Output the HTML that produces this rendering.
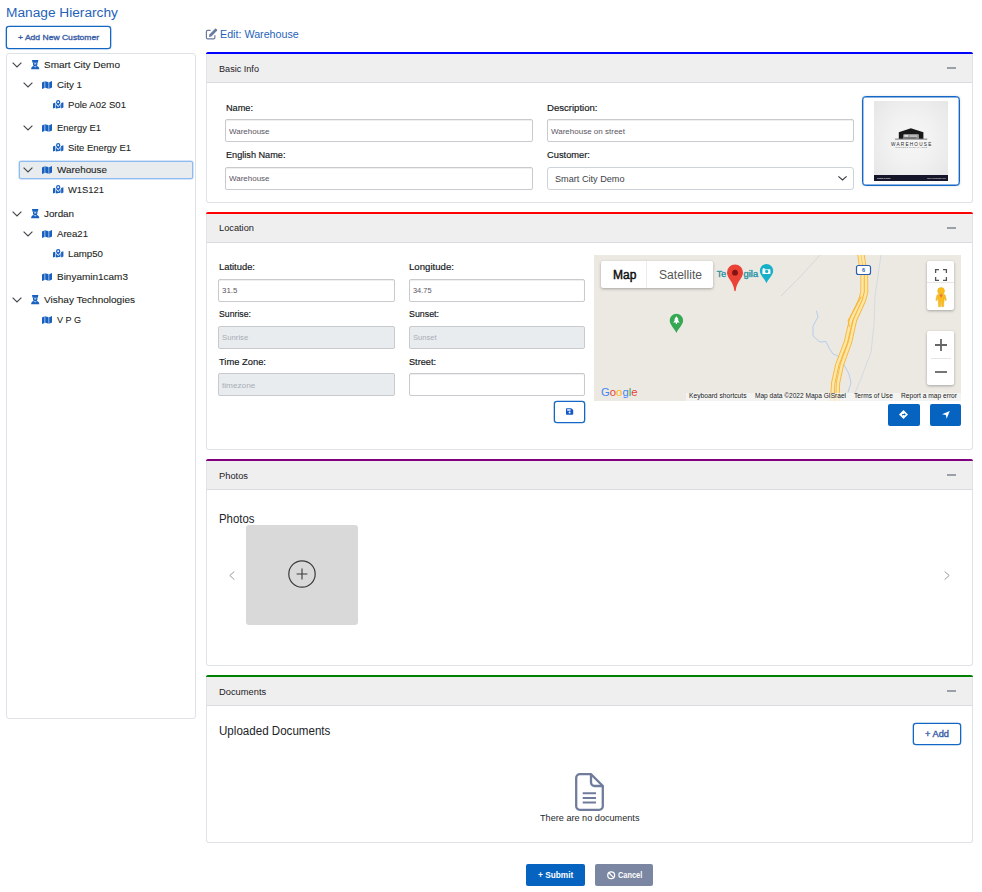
<!DOCTYPE html>
<html><head><meta charset="utf-8"><title>Manage Hierarchy</title>
<style>
*{box-sizing:border-box;margin:0;padding:0}
html,body{width:982px;height:892px;background:#fff;overflow:hidden}
body{font-family:"Liberation Sans",sans-serif;color:#212529;position:relative;font-size:10px}
.t{position:absolute;white-space:nowrap;transform-origin:0 0}
.a{position:absolute}
.btn-o{position:absolute;border:1px solid #1266c4;border-radius:3px;background:#fff;box-shadow:0 0 0 0.3px #1266c4}
.tree{position:absolute;left:6px;top:53px;width:190px;height:666px;border:1px solid #dee2e6;border-radius:3px;background:#fff}
.card{position:absolute;left:206px;width:767px;border:1px solid #dfe3e8;border-top:none;border-radius:3px;background:#fff}
.card .top{position:absolute;left:-1px;right:-1px;top:0;height:2px;border-radius:3px 3px 0 0}
.card .hd{position:absolute;left:0;right:0;top:2px;height:29px;background:#efefef;border-bottom:1px solid #d9dde2}
.card .minus{position:absolute;left:740px;top:15px;width:9px;height:2px;background:#9aa0a7}
.inp{position:absolute;height:23px;border:1px solid #c8cacd;border-radius:2px;background:#fff;box-shadow:inset 0 1px 1px rgba(0,0,0,.07)}
.inp.dis{background:#e9ecef;box-shadow:none}
svg{position:absolute;overflow:visible}
</style></head><body>
<div class="t" style="left:6.00px;top:-2px;font-size:13.7px;line-height:29px;transform:scaleX(1.0006);letter-spacing:0.000px;color:#1f63ba;">Manage Hierarchy</div>
<div class="btn-o" style="left:6px;top:26px;width:105px;height:23px"></div>
<div class="t" style="left:17.80px;top:29px;font-size:8px;line-height:17px;transform:scaleX(1.0684);letter-spacing:0.000px;color:#3a5ea8;-webkit-text-stroke:0.35px #3a5ea8;">+ Add New Customer</div>
<div class="tree"></div>
<div class="a" style="left:19px;top:161px;width:174px;height:18px;background:#e9ecef;border:1px solid #8fbcf0;border-radius:2px;box-shadow:0 0 0 0.5px #a9ccf5"></div>
<svg style="left:12px;top:62.0px" width="10" height="6" viewBox="0 0 10 6"><path d="M0.6 0.6 L5 5 L9.4 0.6" fill="none" stroke="#44484d" stroke-width="1.150"/></svg>
<svg style="left:31px;top:60.0px" width="8.400" height="9.200" viewBox="0 0 8.400 9.200" fill="#1760c0"><path d="M1 0.100h6.400L6.900 2.700H1.500z"/><path d="M2 2.700h4.400v1.500a2.200 2.200 0 0 1-4.400 0z"/><rect x="3.100" y="3.100" width="2.200" height="1.500" rx="0.500" fill="#a9c6ee"/><path d="M0.100 9.200c0-1.900 1.100-3 2.700-3.200L4.200 7.500 5.600 6c1.600.2 2.700 1.300 2.700 3.200z"/></svg>
<div class="t" style="left:44.30px;top:54px;font-size:9.8px;line-height:21px;transform:scaleX(1.0188);letter-spacing:0.000px;color:#1c1f23;-webkit-text-stroke:0.1px #1c1f23;">Smart City Demo</div>
<svg style="left:23px;top:82.0px" width="10" height="6" viewBox="0 0 10 6"><path d="M0.6 0.6 L5 5 L9.4 0.6" fill="none" stroke="#44484d" stroke-width="1.150"/></svg>
<svg style="left:42px;top:81.0px" width="10" height="8" viewBox="0 0 10 8" fill="#1760c0"><path d="M0 1.4L2.6 0.3v6.6L0 8z"/><path d="M3.2 0.2l3.4 1v6.6l-3.4-1z"/><path d="M7.2 1.2L10 0v6.6L7.2 7.8z"/></svg>
<div class="t" style="left:57.00px;top:74px;font-size:9.8px;line-height:21px;transform:scaleX(0.9980);letter-spacing:0.000px;color:#1c1f23;-webkit-text-stroke:0.1px #1c1f23;">City 1</div>
<svg style="left:52.5px;top:100.0px" width="10.400" height="8.700" viewBox="0 0 11 9" fill="#1760c0"><path d="M0 3.6L2.4 2.6v5.6L0 9z"/><path d="M3 4.2c.6 1.2 1.6 2.4 2.5 3 .9-.6 1.900-1.800 2.500-3V8.200L3 8.9z" /><path d="M8.600 3.200L11 2.300v5.600L8.600 8.900z"/><path d="M5.500 0a2.300 2.300 0 0 0-2.300 2.300c0 1.200 1.300 2.800 2.300 3.900 1-1.100 2.300-2.700 2.300-3.900A2.300 2.300 0 0 0 5.500 0zm0 3.300a1 1 0 1 1 0-2 1 1 0 0 1 0 2z"/></svg>
<div class="t" style="left:68.00px;top:94px;font-size:9.8px;line-height:21px;transform:scaleX(0.9765);letter-spacing:0.000px;color:#1c1f23;-webkit-text-stroke:0.1px #1c1f23;">Pole A02 S01</div>
<svg style="left:23px;top:125.0px" width="10" height="6" viewBox="0 0 10 6"><path d="M0.6 0.6 L5 5 L9.4 0.6" fill="none" stroke="#44484d" stroke-width="1.150"/></svg>
<svg style="left:42px;top:124.0px" width="10" height="8" viewBox="0 0 10 8" fill="#1760c0"><path d="M0 1.4L2.6 0.3v6.6L0 8z"/><path d="M3.2 0.2l3.4 1v6.6l-3.4-1z"/><path d="M7.2 1.2L10 0v6.6L7.2 7.8z"/></svg>
<div class="t" style="left:57.00px;top:117px;font-size:9.8px;line-height:21px;transform:scaleX(0.9615);letter-spacing:0.000px;color:#1c1f23;-webkit-text-stroke:0.1px #1c1f23;">Energy E1</div>
<svg style="left:52.5px;top:143.0px" width="10.400" height="8.700" viewBox="0 0 11 9" fill="#1760c0"><path d="M0 3.6L2.4 2.6v5.6L0 9z"/><path d="M3 4.2c.6 1.2 1.6 2.4 2.5 3 .9-.6 1.900-1.800 2.500-3V8.200L3 8.9z" /><path d="M8.600 3.200L11 2.300v5.600L8.600 8.900z"/><path d="M5.500 0a2.300 2.300 0 0 0-2.300 2.300c0 1.200 1.300 2.800 2.300 3.900 1-1.100 2.300-2.700 2.300-3.900A2.300 2.300 0 0 0 5.500 0zm0 3.300a1 1 0 1 1 0-2 1 1 0 0 1 0 2z"/></svg>
<div class="t" style="left:68.00px;top:137px;font-size:9.8px;line-height:21px;transform:scaleX(0.9637);letter-spacing:0.000px;color:#1c1f23;-webkit-text-stroke:0.1px #1c1f23;">Site Energy E1</div>
<svg style="left:23px;top:167.0px" width="10" height="6" viewBox="0 0 10 6"><path d="M0.6 0.6 L5 5 L9.4 0.6" fill="none" stroke="#44484d" stroke-width="1.150"/></svg>
<svg style="left:42px;top:166.0px" width="10" height="8" viewBox="0 0 10 8" fill="#1760c0"><path d="M0 1.4L2.6 0.3v6.6L0 8z"/><path d="M3.2 0.2l3.4 1v6.6l-3.4-1z"/><path d="M7.2 1.2L10 0v6.6L7.2 7.8z"/></svg>
<div class="t" style="left:57.00px;top:159px;font-size:9.8px;line-height:21px;transform:scaleX(1.0050);letter-spacing:0.000px;color:#1c1f23;-webkit-text-stroke:0.1px #1c1f23;">Warehouse</div>
<svg style="left:52.5px;top:185.0px" width="10.400" height="8.700" viewBox="0 0 11 9" fill="#1760c0"><path d="M0 3.6L2.4 2.6v5.6L0 9z"/><path d="M3 4.2c.6 1.2 1.6 2.4 2.5 3 .9-.6 1.900-1.800 2.500-3V8.200L3 8.9z" /><path d="M8.600 3.200L11 2.300v5.600L8.600 8.900z"/><path d="M5.500 0a2.300 2.300 0 0 0-2.300 2.300c0 1.200 1.300 2.800 2.300 3.900 1-1.100 2.300-2.700 2.300-3.900A2.300 2.300 0 0 0 5.500 0zm0 3.300a1 1 0 1 1 0-2 1 1 0 0 1 0 2z"/></svg>
<div class="t" style="left:68.00px;top:179px;font-size:9.8px;line-height:21px;transform:scaleX(0.9578);letter-spacing:0.000px;color:#1c1f23;-webkit-text-stroke:0.1px #1c1f23;">W1S121</div>
<svg style="left:12px;top:211.0px" width="10" height="6" viewBox="0 0 10 6"><path d="M0.6 0.6 L5 5 L9.4 0.6" fill="none" stroke="#44484d" stroke-width="1.150"/></svg>
<svg style="left:31px;top:209.0px" width="8.400" height="9.200" viewBox="0 0 8.400 9.200" fill="#1760c0"><path d="M1 0.100h6.400L6.900 2.700H1.500z"/><path d="M2 2.700h4.400v1.500a2.200 2.200 0 0 1-4.400 0z"/><rect x="3.100" y="3.100" width="2.200" height="1.500" rx="0.500" fill="#a9c6ee"/><path d="M0.100 9.200c0-1.900 1.100-3 2.700-3.200L4.200 7.500 5.600 6c1.600.2 2.700 1.300 2.700 3.200z"/></svg>
<div class="t" style="left:44.30px;top:203px;font-size:9.8px;line-height:21px;transform:scaleX(1.0012);letter-spacing:0.000px;color:#1c1f23;-webkit-text-stroke:0.1px #1c1f23;">Jordan</div>
<svg style="left:23px;top:231.0px" width="10" height="6" viewBox="0 0 10 6"><path d="M0.6 0.6 L5 5 L9.4 0.6" fill="none" stroke="#44484d" stroke-width="1.150"/></svg>
<svg style="left:42px;top:230.0px" width="10" height="8" viewBox="0 0 10 8" fill="#1760c0"><path d="M0 1.4L2.6 0.3v6.6L0 8z"/><path d="M3.2 0.2l3.4 1v6.6l-3.4-1z"/><path d="M7.2 1.2L10 0v6.6L7.2 7.8z"/></svg>
<div class="t" style="left:57.00px;top:223px;font-size:9.8px;line-height:21px;transform:scaleX(0.9810);letter-spacing:0.000px;color:#1c1f23;-webkit-text-stroke:0.1px #1c1f23;">Area21</div>
<svg style="left:52.5px;top:249.0px" width="10.400" height="8.700" viewBox="0 0 11 9" fill="#1760c0"><path d="M0 3.6L2.4 2.6v5.6L0 9z"/><path d="M3 4.2c.6 1.2 1.6 2.4 2.5 3 .9-.6 1.900-1.800 2.500-3V8.200L3 8.9z" /><path d="M8.600 3.200L11 2.300v5.600L8.600 8.900z"/><path d="M5.500 0a2.300 2.300 0 0 0-2.300 2.300c0 1.200 1.300 2.800 2.300 3.900 1-1.100 2.300-2.700 2.300-3.900A2.300 2.300 0 0 0 5.500 0zm0 3.300a1 1 0 1 1 0-2 1 1 0 0 1 0 2z"/></svg>
<div class="t" style="left:68.00px;top:243px;font-size:9.8px;line-height:21px;transform:scaleX(0.9883);letter-spacing:0.000px;color:#1c1f23;-webkit-text-stroke:0.1px #1c1f23;">Lamp50</div>
<svg style="left:42px;top:273.0px" width="10" height="8" viewBox="0 0 10 8" fill="#1760c0"><path d="M0 1.4L2.6 0.3v6.6L0 8z"/><path d="M3.2 0.2l3.4 1v6.6l-3.4-1z"/><path d="M7.2 1.2L10 0v6.6L7.2 7.8z"/></svg>
<div class="t" style="left:57.00px;top:266px;font-size:9.8px;line-height:21px;transform:scaleX(1.0184);letter-spacing:0.000px;color:#1c1f23;-webkit-text-stroke:0.1px #1c1f23;">Binyamin1cam3</div>
<svg style="left:12px;top:297.0px" width="10" height="6" viewBox="0 0 10 6"><path d="M0.6 0.6 L5 5 L9.4 0.6" fill="none" stroke="#44484d" stroke-width="1.150"/></svg>
<svg style="left:31px;top:295.0px" width="8.400" height="9.200" viewBox="0 0 8.400 9.200" fill="#1760c0"><path d="M1 0.100h6.400L6.900 2.700H1.500z"/><path d="M2 2.700h4.400v1.500a2.200 2.200 0 0 1-4.400 0z"/><rect x="3.100" y="3.100" width="2.200" height="1.500" rx="0.500" fill="#a9c6ee"/><path d="M0.100 9.200c0-1.900 1.100-3 2.700-3.200L4.200 7.500 5.600 6c1.600.2 2.700 1.300 2.700 3.200z"/></svg>
<div class="t" style="left:44.30px;top:289px;font-size:9.8px;line-height:21px;transform:scaleX(1.0226);letter-spacing:0.000px;color:#1c1f23;-webkit-text-stroke:0.1px #1c1f23;">Vishay Technologies</div>
<svg style="left:42px;top:316.0px" width="10" height="8" viewBox="0 0 10 8" fill="#1760c0"><path d="M0 1.4L2.6 0.3v6.6L0 8z"/><path d="M3.2 0.2l3.4 1v6.6l-3.4-1z"/><path d="M7.2 1.2L10 0v6.6L7.2 7.8z"/></svg>
<div class="t" style="left:57.00px;top:309px;font-size:9.8px;line-height:21px;transform:scaleX(0.9243);letter-spacing:0.000px;color:#1c1f23;-webkit-text-stroke:0.1px #1c1f23;">V P G</div>
<svg style="left:205px;top:28px" width="13" height="12" viewBox="205 28 13 12"><path d="M214.900 35.200V37.600a1.300 1.300 0 0 1-1.300 1.300H207.700a1.300 1.300 0 0 1-1.300-1.300V31.700a1.300 1.300 0 0 1 1.300-1.300H210.600" fill="none" stroke="#6a7a9d" stroke-width="1.200"/><path d="M208.900 37l0.500-2.400 5.600-5.900a.8.800 0 0 1 1.100 0l.9.900a.8.800 0 0 1 0 1.100l-5.700 5.800z" fill="#6a7a9d"/></svg>
<div class="t" style="left:220.20px;top:23px;font-size:10.5px;line-height:22px;transform:scaleX(1.0203);letter-spacing:0.000px;color:#1f63ba;">Edit: Warehouse</div>
<div class="card" style="top:52px;height:151px"><div class="top" style="background:#0000ff"></div><div class="hd"></div><div class="minus"></div></div>
<div class="t" style="left:218.60px;top:58px;font-size:9.7px;line-height:21px;transform:scaleX(0.9391);letter-spacing:0.000px;color:#1d2126;">Basic Info</div>
<div class="t" style="left:226.00px;top:97px;font-size:9.7px;line-height:21px;transform:scaleX(0.9451);letter-spacing:0.000px;color:#15181b;-webkit-text-stroke:0.17px #15181b;">Name:</div>
<div class="inp" style="left:225px;top:119px;width:308px;height:23px"></div>
<div class="t" style="left:229.00px;top:123px;font-size:8px;line-height:17px;transform:scaleX(0.9972);letter-spacing:0.000px;color:#5a5560;">Warehouse</div>
<div class="t" style="left:226.00px;top:144px;font-size:9.7px;line-height:21px;transform:scaleX(0.9433);letter-spacing:0.000px;color:#15181b;-webkit-text-stroke:0.17px #15181b;">English Name:</div>
<div class="inp" style="left:225px;top:167px;width:308px;height:23px"></div>
<div class="t" style="left:229.00px;top:170px;font-size:8px;line-height:17px;transform:scaleX(0.9972);letter-spacing:0.000px;color:#5a5560;">Warehouse</div>
<div class="t" style="left:547.00px;top:97px;font-size:9.7px;line-height:21px;transform:scaleX(0.9861);letter-spacing:0.000px;color:#15181b;-webkit-text-stroke:0.17px #15181b;">Description:</div>
<div class="inp" style="left:547px;top:119px;width:307px;height:23px"></div>
<div class="t" style="left:551.00px;top:123px;font-size:8px;line-height:17px;transform:scaleX(1.0005);letter-spacing:0.000px;color:#5a5560;">Warehouse on street</div>
<div class="t" style="left:547.00px;top:144px;font-size:9.7px;line-height:21px;transform:scaleX(0.9611);letter-spacing:0.000px;color:#15181b;-webkit-text-stroke:0.17px #15181b;">Customer:</div>
<div class="a" style="left:547px;top:167px;width:307px;height:23px;border:1px solid #cdd3da;border-radius:3px;background:#fff"></div>
<div class="t" style="left:555.00px;top:170px;font-size:9px;line-height:18px;transform:scaleX(1.0144);letter-spacing:0.000px;color:#3d4248;">Smart City Demo</div>
<svg style="left:838px;top:175.700px" width="9" height="5" viewBox="0 0 9 5"><path d="M0.400 0.400L4.500 4 8.600 0.400" fill="none" stroke="#343a40" stroke-width="1.100"/></svg>
<div class="a" style="left:862px;top:96px;width:98px;height:90px;border:1px solid #1668c7;border-radius:3.500px;background:#fff;box-shadow:0 0 3px rgba(0,0,0,.13), inset 0 0 0 0.400px #1668c7"></div>
<div class="a" style="left:874px;top:101px;width:74px;height:80px;background:radial-gradient(ellipse at 50% 48%,#f7f7f7 0%,#f1f1f1 45%,#e5e5e5 100%)"></div>
<div class="a" style="left:874px;top:175px;width:74px;height:6px;background:#15162a"></div>
<svg style="left:895px;top:127.500px" width="33" height="12" viewBox="895 127.500 33 12"><path d="M898.800 138.300V131.700L910.900 127.700 923.400 131.700V138.300H918.500V134H903.600V138.300z" fill="#191919"/><rect x="903.600" y="134" width="14.900" height="4.300" fill="#9a9a9a"/><rect x="904.400" y="134.600" width="3.800" height="1.600" fill="#e8e8e8"/><rect x="909.500" y="135" width="7.600" height="1.100" fill="#d4d4d4"/><rect x="904.400" y="137" width="12" height="0.800" fill="#555"/><path d="M895 138.600H927.300" stroke="#2a2a2a" stroke-width="0.600"/></svg>
<div class="t" style="left:891.00px;top:139px;font-size:4.7px;line-height:11px;transform:scaleX(1.0000);letter-spacing:1.220px;color:#2a2a2a;">WAREHOUSE</div>
<div class="t" style="left:895.50px;top:145px;font-size:1.7px;line-height:4px;transform:scaleX(1.0000);letter-spacing:0.534px;color:#555;">BUSINESS SLOGAN HERE</div>
<div class="t" style="left:876.50px;top:176px;font-size:1.9px;line-height:4px;transform:scaleX(0.7509);letter-spacing:0.000px;color:#e8e8e8;font-weight:700;">designed by freepik</div>
<div class="t" style="left:927.30px;top:176px;font-size:1.9px;line-height:4px;transform:scaleX(1.0003);letter-spacing:0.000px;color:#e8e8e8;">www.yourwebsite.com</div>
<div class="card" style="top:212px;height:238px"><div class="top" style="background:#ff0000"></div><div class="hd"></div><div class="minus"></div></div>
<div class="t" style="left:218.60px;top:217px;font-size:9.7px;line-height:21px;transform:scaleX(0.9544);letter-spacing:0.000px;color:#1d2126;">Location</div>
<div class="t" style="left:218.80px;top:256px;font-size:9.7px;line-height:21px;transform:scaleX(0.9674);letter-spacing:0.000px;color:#15181b;-webkit-text-stroke:0.17px #15181b;">Latitude:</div>
<div class="inp" style="left:218px;top:279px;width:177px;height:23px"></div>
<div class="t" style="left:222.00px;top:282px;font-size:8px;line-height:17px;transform:scaleX(0.9891);letter-spacing:0.000px;color:#5a5560;">31.5</div>
<div class="t" style="left:218.80px;top:303px;font-size:9.7px;line-height:21px;transform:scaleX(0.8993);letter-spacing:0.000px;color:#15181b;-webkit-text-stroke:0.17px #15181b;">Sunrise:</div>
<div class="inp dis" style="left:218px;top:326px;width:177px;height:23px"></div>
<div class="t" style="left:222.00px;top:329px;font-size:8px;line-height:17px;transform:scaleX(0.9696);letter-spacing:0.000px;color:#a7aeb6;">Sunrise</div>
<div class="t" style="left:218.80px;top:351px;font-size:9.7px;line-height:21px;transform:scaleX(0.9652);letter-spacing:0.000px;color:#15181b;-webkit-text-stroke:0.17px #15181b;">Time Zone:</div>
<div class="inp dis" style="left:218px;top:373px;width:177px;height:23px"></div>
<div class="t" style="left:222.00px;top:377px;font-size:8px;line-height:17px;transform:scaleX(1.0258);letter-spacing:0.000px;color:#a7aeb6;">timezone</div>
<div class="t" style="left:409.00px;top:256px;font-size:9.7px;line-height:21px;transform:scaleX(0.9932);letter-spacing:0.000px;color:#15181b;-webkit-text-stroke:0.17px #15181b;">Longitude:</div>
<div class="inp" style="left:409px;top:279px;width:176px;height:23px"></div>
<div class="t" style="left:413.00px;top:282px;font-size:8px;line-height:17px;transform:scaleX(0.9241);letter-spacing:0.000px;color:#5a5560;">34.75</div>
<div class="t" style="left:409.00px;top:303px;font-size:9.7px;line-height:21px;transform:scaleX(0.9120);letter-spacing:0.000px;color:#15181b;-webkit-text-stroke:0.17px #15181b;">Sunset:</div>
<div class="inp dis" style="left:409px;top:326px;width:176px;height:23px"></div>
<div class="t" style="left:413.00px;top:329px;font-size:8px;line-height:17px;transform:scaleX(0.9435);letter-spacing:0.000px;color:#a7aeb6;">Sunset</div>
<div class="t" style="left:409.00px;top:351px;font-size:9.7px;line-height:21px;transform:scaleX(0.9449);letter-spacing:0.000px;color:#15181b;-webkit-text-stroke:0.17px #15181b;">Street:</div>
<div class="inp" style="left:409px;top:373px;width:176px;height:23px"></div>
<div class="btn-o" style="left:554px;top:401px;width:31px;height:22px"></div>
<svg style="left:566px;top:408.200px" width="7.200" height="7" viewBox="0 0 8 7"><path d="M0.800 0h5L8 1.800V6.200a.8.800 0 0 1-.8.800H.8A.8.800 0 0 1 0 6.200V.8A.8.800 0 0 1 .8 0z" fill="#1459c8"/><rect x="1.300" y="1" width="3.800" height="1.600" fill="#fff"/><circle cx="4" cy="4.700" r="1.100" fill="#fff"/></svg>
<div class="a" id="map" style="left:594px;top:255px;width:367px;height:146px;background:#ece9e3;overflow:hidden">
<svg style="left:0;top:0" width="367" height="146" viewBox="594 255 367 146">
<g fill="none" stroke-linecap="round" stroke-linejoin="round">
<path d="M820 255L800 277 781 296" stroke="#cfd3da" stroke-width="0.8"/>
<path d="M881 255L875 296 874 325 871 352 862 376 855 393" stroke="#cfd5de" stroke-width="0.8"/>
<path d="M816.500 311L818 317 813 326 813 336 820 342 826 341.500 829 348 833 354 838 356 843 363 849 374 851 383 848 392" stroke="#a9c4ee" stroke-width="0.8"/>
<path d="M859.5 255 L860.9 265 L862.6 275 L862.5 292 L860.3 300 L851.0 320 L845.9 342 L837.2 365 L833.2 383 L832.2 401" stroke="#f6b73c" stroke-width="4.300"/><path d="M862.5 255 L864.1 265 L866.0 275 L866.1 292 L864.1 300 L855.0 320 L850.1 342 L841.8 365 L838.0 383 L837.3 401" stroke="#f6b73c" stroke-width="4.300"/><path d="M859.5 255 L860.9 265 L862.6 275 L862.5 292 L860.3 300 L851.0 320 L845.9 342 L837.2 365 L833.2 383 L832.2 401" stroke="#fde6a6" stroke-width="2.500"/><path d="M862.5 255 L864.1 265 L866.0 275 L866.1 292 L864.1 300 L855.0 320 L850.1 342 L841.8 365 L838.0 383 L837.3 401" stroke="#fde6a6" stroke-width="2.500"/><path d="M861 297L848.200 320.500 849.300 326.500" stroke="#f6b73c" stroke-width="1.100"/>
</g>
<rect x="856.500" y="265.500" width="14" height="9" rx="2" fill="#fff" stroke="#2c5db3" stroke-width="1.200"/>
<text x="863.500" y="272.300" font-family="Liberation Sans, sans-serif" font-size="5.500" font-weight="700" fill="#2c5db3" text-anchor="middle">6</text>
<g font-family="Liberation Sans, sans-serif" font-size="9.300" fill="#3f9aa6" stroke="#f3f1ec" stroke-width="1.600" paint-order="stroke" stroke-linejoin="round"><text x="716.800" y="277.300" textLength="9.300" lengthAdjust="spacingAndGlyphs">Te</text><text x="729.500" y="277.300" textLength="11" lengthAdjust="spacingAndGlyphs">l Na</text><text x="743.500" y="277.300" textLength="14.600" lengthAdjust="spacingAndGlyphs">gila</text></g><g font-family="Liberation Sans, sans-serif" font-size="9.300" fill="#3f9aa6" stroke="#3f9aa6" stroke-width="0.350"><text x="716.800" y="277.300" textLength="9.300" lengthAdjust="spacingAndGlyphs">Te</text><text x="729.500" y="277.300" textLength="11" lengthAdjust="spacingAndGlyphs">l Na</text><text x="743.500" y="277.300" textLength="14.600" lengthAdjust="spacingAndGlyphs">gila</text></g>
<!-- teal camera pin -->
<path d="M766.500 264a6.700 6.700 0 0 0-6.700 6.700c0 4.600 5.200 8.300 6.700 12.600 1.500-4.300 6.700-8 6.700-12.600a6.700 6.700 0 0 0-6.700-6.700z" fill="#16b1c8"/>
<rect x="762.400" y="269.300" width="8" height="4.600" rx="0.500" fill="#fff"/><rect x="762.800" y="268.200" width="1.800" height="1.400" fill="#fff"/><circle cx="766.700" cy="271.400" r="1.600" fill="#16b1c8"/>
<!-- green tree pin -->
<path d="M676.400 313.800a6.700 6.700 0 0 0-6.700 6.700c0 4.600 5.200 8.300 6.700 12.600 1.500-4.300 6.700-8 6.700-12.600a6.700 6.700 0 0 0-6.700-6.700z" fill="#34a853"/>
<path d="M676.400 316.200l2.300 3.300h-1.100l2 3h-2.600v1.600h-1.200v-1.600h-2.600l2-3h-1.100z" fill="#fff"/>
<!-- red pin -->
<path d="M735 264.500a8 8 0 0 0-8 8c0 3.200 2 5.800 3.800 8.600 1.700 2.600 3 5.300 3.500 9.400a.7.700 0 0 0 1.400 0c.5-4.100 1.800-6.800 3.500-9.400 1.800-2.800 3.800-5.400 3.800-8.600a8 8 0 0 0-8-8z" fill="#ea4335"/>
<circle cx="735" cy="272.700" r="2.900" fill="#811411"/>
</svg>
<!-- map type control -->
<div class="a" style="left:7px;top:6px;width:112px;height:27px;background:#fff;border-radius:2px;box-shadow:0 1px 3px rgba(0,0,0,.3)"></div>
<div class="a" style="left:52px;top:6px;width:1px;height:27px;background:#ececec"></div>
<!-- fullscreen + pegman -->
<div class="a" style="left:333px;top:6px;width:27px;height:49px;background:#fff;border-radius:2px;box-shadow:0 1px 3px rgba(0,0,0,.3)"></div>
<div class="a" style="left:333px;top:27px;width:27px;height:1px;background:#e6e6e6"></div>
<svg style="left:341px;top:14px" width="12" height="12" viewBox="0 0 12 12"><path d="M0.600 4V0.600H4M8 0.600h3.400V4M11.400 8v3.400H8M4 11.400H0.600V8" fill="none" stroke="#555" stroke-width="1.300"/></svg>
<svg style="left:340.500px;top:32px" width="12.200" height="20" viewBox="0 0 12.200 20"><circle cx="6.100" cy="3.900" r="3.450" fill="#fbbc1d" stroke="#e3a414" stroke-width="0.400"/><path d="M3.300 7.400h5.600c.8 0 1.300.5 1.500 1.300l1 4.500-1.100.4-1.200-3.500v2.700l-.5 6.900H6.700l-.4-5.200h-.4l-.4 5.200H3.600l-.5-6.900V10.100L1.900 13.600.8 13.200l1-4.500c.2-.8.700-1.300 1.500-1.300z" fill="#fbbc1d" stroke="#e3a414" stroke-width="0.400"/><path d="M4.200 7.400h3.800L6.100 11z" fill="#e8772e"/></svg>
<!-- zoom -->
<div class="a" style="left:333px;top:76px;width:27px;height:54px;background:#fff;border-radius:2px;box-shadow:0 1px 3px rgba(0,0,0,.3)"></div>
<div class="a" style="left:337px;top:103px;width:20px;height:1px;background:#e6e6e6"></div>
<svg style="left:341px;top:84px" width="12" height="12" viewBox="0 0 12 12"><path d="M6 0v12M0 6h12" stroke="#666" stroke-width="1.800"/></svg>
<svg style="left:341px;top:111px" width="12" height="12" viewBox="0 0 12 12"><path d="M0 6h12" stroke="#666" stroke-width="1.800"/></svg>
<div class="a" style="left:92px;top:137.500px;width:275px;height:9px;background:rgba(245,245,245,.75)"></div>
</div>
<div class="a" style="left:888px;top:404px;width:32px;height:22px;background:#0763c0;border-radius:2px"></div>
<svg style="left:899.400px;top:410.300px" width="9" height="9" viewBox="0 0 9 9"><path d="M4.500 0L9 4.500 4.500 9 0 4.500z" fill="#fff"/><path d="M3 5.600V4.600a.6.600 0 0 1 .6-.6H5.300V3L6.800 4.400 5.300 5.800V4.900H3.900V5.600z" fill="#0763c0"/></svg>
<div class="a" style="left:930px;top:404px;width:31px;height:22px;background:#0763c0;border-radius:2px"></div>
<svg style="left:941.500px;top:410.800px" width="7.800" height="7.800" viewBox="0 0 8 8"><path d="M8 0L4.700 8 4 4 0 3.300z" fill="#fff"/></svg>

<div class="t" style="left:612.70px;top:263px;font-size:12px;line-height:24px;transform:scaleX(0.9981);letter-spacing:0.000px;color:#0e0e0e;-webkit-text-stroke:0.45px #0e0e0e;">Map</div>
<div class="t" style="left:658.50px;top:263px;font-size:12px;line-height:24px;transform:scaleX(1.0072);letter-spacing:0.000px;color:#565656;">Satellite</div>
<div class="t" style="left:689.00px;top:388px;font-size:7px;line-height:15px;transform:scaleX(0.9534);letter-spacing:0.000px;color:#1a1a1a;">Keyboard shortcuts</div>
<div class="t" style="left:754.70px;top:388px;font-size:7px;line-height:15px;transform:scaleX(0.9382);letter-spacing:0.000px;color:#1a1a1a;">Map data ©2022 Mapa GISrael</div>
<div class="t" style="left:854.20px;top:388px;font-size:7px;line-height:15px;transform:scaleX(0.9410);letter-spacing:0.000px;color:#1a1a1a;">Terms of Use</div>
<div class="t" style="left:901.00px;top:388px;font-size:7px;line-height:15px;transform:scaleX(0.9470);letter-spacing:0.000px;color:#1a1a1a;">Report a map error</div>
<div class="t" style="left:601.00px;top:380px;font-size:11.6px;line-height:24px;transform:scaleX(1.0000);letter-spacing:0.000px;color:#4285f4;transform:scaleX(0.975);"><span style="color:#4285f4">G</span><span style="color:#ea4335">o</span><span style="color:#fbbc05">o</span><span style="color:#4285f4">g</span><span style="color:#34a853">l</span><span style="color:#ea4335">e</span></div>
<div class="card" style="top:459px;height:207px"><div class="top" style="background:#800080"></div><div class="hd"></div><div class="minus"></div></div>
<div class="t" style="left:218.60px;top:465px;font-size:9.7px;line-height:21px;transform:scaleX(0.9603);letter-spacing:0.000px;color:#1d2126;">Photos</div>
<div class="t" style="left:218.80px;top:506px;font-size:12.5px;line-height:26px;transform:scaleX(0.9122);letter-spacing:0.000px;color:#212529;">Photos</div>
<div class="a" style="left:246px;top:525px;width:112px;height:100px;background:#d9d9d9;border-radius:3px"></div>
<svg style="left:288px;top:560px" width="28" height="28" viewBox="0 0 28 28"><circle cx="14" cy="14" r="13.200" fill="none" stroke="#3a3a3a" stroke-width="1.200"/><path d="M14 8.600v10.800M8.600 14h10.800" stroke="#3a3a3a" stroke-width="1.100"/></svg>
<svg style="left:229px;top:570.500px" width="6" height="9" viewBox="0 0 6 9"><path d="M5.300 0.500L0.800 4.500 5.300 8.500" fill="none" stroke="#9a9a9a" stroke-width="1"/></svg>
<svg style="left:944px;top:570.500px" width="6" height="9" viewBox="0 0 6 9"><path d="M0.700 0.500L5.200 4.500 0.700 8.500" fill="none" stroke="#9a9a9a" stroke-width="1"/></svg>
<div class="card" style="top:675px;height:168px"><div class="top" style="background:#008000"></div><div class="hd"></div><div class="minus"></div></div>
<div class="t" style="left:218.60px;top:681px;font-size:9.7px;line-height:21px;transform:scaleX(0.9621);letter-spacing:0.000px;color:#1d2126;">Documents</div>
<div class="t" style="left:218.80px;top:718px;font-size:12.3px;line-height:26px;transform:scaleX(0.9418);letter-spacing:0.000px;color:#212529;">Uploaded Documents</div>
<div class="btn-o" style="left:913px;top:723px;width:48px;height:22px"></div>
<div class="t" style="left:925.00px;top:725px;font-size:8.2px;line-height:19px;transform:scaleX(1.1318);letter-spacing:0.000px;color:#3a5ea8;-webkit-text-stroke:0.35px #3a5ea8;">+ Add</div>
<svg style="left:575px;top:773px" width="29" height="38" viewBox="0 0 29 38"><path d="M4.800 1.200H16l11.800 11.800V33.200a3.600 3.600 0 0 1-3.600 3.600H4.800A3.600 3.600 0 0 1 1.200 33.200V4.800A3.600 3.600 0 0 1 4.800 1.200z" fill="none" stroke="#6f7c9b" stroke-width="2.300"/><path d="M16 1.200v8.300a3.500 3.500 0 0 0 3.500 3.500h8.300" fill="none" stroke="#6f7c9b" stroke-width="2.300"/><path d="M7.700 20.300h13.300M7.700 25h13.300M7.700 29.500h13.300" stroke="#6f7c9b" stroke-width="2"/></svg>
<div class="t" style="left:539.80px;top:808px;font-size:9.3px;line-height:20px;transform:scaleX(0.9820);letter-spacing:0.000px;color:#26292d;">There are no documents</div>
<div class="a" style="left:526px;top:864px;width:59px;height:22px;background:#0763c0;border-radius:2px"></div>
<div class="t" style="left:537.70px;top:866px;font-size:8.3px;line-height:18px;transform:scaleX(0.9978);letter-spacing:0.000px;color:#fff;font-weight:700;">+ Submit</div>
<div class="a" style="left:595px;top:864px;width:58px;height:22px;background:#7b87a2;border-radius:2px"></div>
<svg style="left:607px;top:870.700px" width="8.400" height="8.400" viewBox="0 0 10 10"><circle cx="5" cy="5" r="4.100" fill="none" stroke="#fff" stroke-width="1.500"/><path d="M2.100 2.100L7.900 7.900" stroke="#fff" stroke-width="1.500"/></svg>
<div class="t" style="left:617.80px;top:866px;font-size:8.3px;line-height:18px;transform:scaleX(0.8928);letter-spacing:0.000px;color:#fff;font-weight:700;">Cancel</div>
</body></html>
